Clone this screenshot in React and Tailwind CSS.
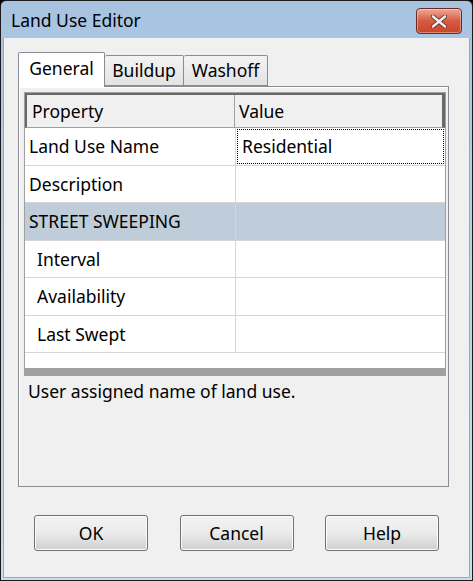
import React from "react";

const font = { fontFamily: '"Noto Sans", "Open Sans", sans-serif' };

function Tab({ label, active, w }) {
  if (active) {
    return (
      <div
        className={`relative z-10 h-[35px] border border-b-0 border-[#898c95] bg-[#ffffff] rounded-t-[2px] flex items-start pt-[2px] justify-center text-[17.5px] text-black ${w}`}
      >
        {label}
      </div>
    );
  }
  return (
    <div
      className={`h-[31px] mt-[3px] border border-[#898c95] border-l-0 bg-gradient-to-b from-[#f3f3f3] to-[#e3e3e3] rounded-t-[2px] flex items-center justify-center text-[17.5px] text-black ${w}`}
    >
      {label}
    </div>
  );
}

function Row({ label, value, indent, h, group, selected }) {
  return (
    <div
      className={`flex border-b border-[#d5d5d5] ${h} ${group ? "bg-[#bfcddb]" : "bg-white"}`}
    >
      <div
        className={`w-[211px] shrink-0 border-r border-[#d5d5d5] flex items-center text-[17.5px] text-black ${indent ? "pl-[12px]" : "pl-[4px]"}`}
      >
        {label}
      </div>
      <div className="flex-1 flex items-center p-[1px]">
        <div
          className={`w-full h-full flex items-center pl-[4px] text-[17.5px] text-black ${selected ? "border border-dotted border-black" : ""}`}
        >
          {value}
        </div>
      </div>
    </div>
  );
}

function Button({ label }) {
  return (
    <div className="w-[114px] h-[36px] rounded-[3px] border border-[#707070] bg-gradient-to-b from-[#f2f2f2] via-[#ebebeb] to-[#cfcfcf] shadow-[inset_0_0_0_1px_#fcfcfc] flex items-center justify-center text-[17.5px] text-black">
      {label}
    </div>
  );
}

export default function App() {
  return (
    <div className="w-[473px] h-[581px] bg-black" style={font}>
      <div className="w-[473px] h-[581px] rounded-t-[6px] border border-[#1b1b1b] bg-gradient-to-b from-[#a7c3e0] via-[#bcd3eb] to-[#c9dcf0] flex flex-col">
        {/* title bar */}
        <div className="h-[37px] shrink-0 flex items-start">
          <div className="pl-[10px] pt-[8px] text-[17.5px] text-black leading-[22px]">
            Land Use Editor
          </div>
          <div className="ml-auto mr-[10px] mt-[7px] w-[46px] h-[26px] rounded-[4px] border border-[#6b2a23] bg-gradient-to-b from-[#eaa898] via-[#d65a42] to-[#c8452a] flex items-center justify-center shadow-[inset_0_0_0_1px_rgba(255,255,255,0.35)]">
            <svg width="16" height="13" viewBox="0 0 16 13">
              <path
                d="M2 1.5 L14 11.5 M14 1.5 L2 11.5"
                stroke="#5c2419"
                strokeWidth="4.2"
                strokeLinecap="round"
              />
              <path
                d="M2 1.5 L14 11.5 M14 1.5 L2 11.5"
                stroke="#eeeeee"
                strokeWidth="2.6"
                strokeLinecap="round"
              />
            </svg>
          </div>
        </div>
        {/* client area */}
        <div className="flex-1 mx-[2px] mb-[2px] bg-[#f0f0f0] border border-[#8fa9c6] border-t-0 flex flex-col">
          <div className="pl-[14px] pt-[14px] pr-[20px]">
            <div className="flex items-start h-[35px]">
              <Tab label="General" active w="w-[87px]" />
              <Tab label="Buildup" w="w-[79px]" />
              <Tab label="Washoff" w="w-[84px]" />
            </div>
            <div className="-mt-[1px] h-[401px] border border-[#898c95] bg-[#f0f0f0] shadow-[inset_1px_1px_0_#ffffff] pl-[5px] pr-[2px] pt-[5px]">
              <div className="border border-[#a0a0a0] bg-white">
                <div className="h-[35px] flex bg-[#f0f0f0] border-2 border-[#696969] border-r-[3px] border-b border-b-[#a0a0a0]">
                  <div className="w-[208px] border-r border-[#a0a0a0] flex items-center pl-[5px] text-[17.5px]">
                    Property
                  </div>
                  <div className="flex-1 flex items-center pl-[4px] text-[17.5px]">
                    Value
                  </div>
                </div>
                <Row label="Land Use Name" value="Residential" h="h-[38px]" selected />
                <Row label="Description" h="h-[37px]" />
                <Row label="STREET SWEEPING" h="h-[38px]" group />
                <Row label="Interval" h="h-[37px]" indent />
                <Row label="Availability" h="h-[38px]" indent />
                <Row label="Last Swept" h="h-[37px]" indent />
                <div className="h-[15px] bg-white" />
                <div className="h-[7px] bg-[#a0a0a0]" />
              </div>
              <div className="pl-[4px] pt-[3px] text-[17.5px] leading-[24px] text-black">
                User assigned name of land use.
              </div>
            </div>
          </div>
          <div className="flex justify-between px-[30px] pt-[28px]">
            <Button label="OK" />
            <Button label="Cancel" />
            <Button label="Help" />
          </div>
        </div>
      </div>
    </div>
  );
}
